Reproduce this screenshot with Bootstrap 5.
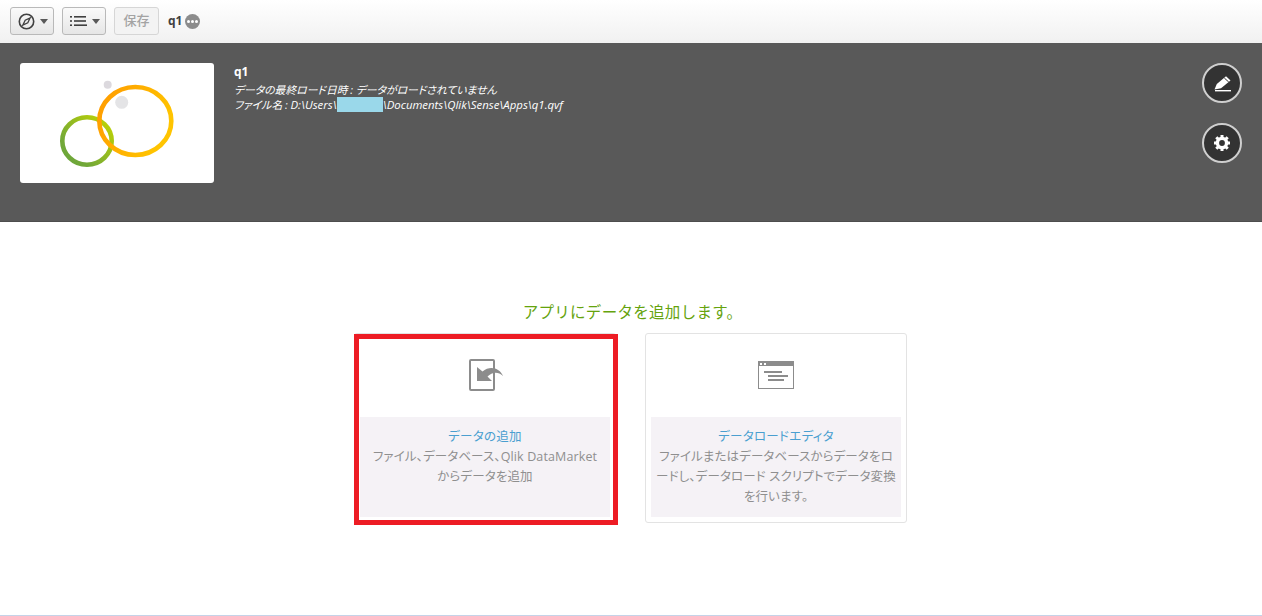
<!DOCTYPE html>
<html lang="ja">
<head>
    <meta charset="UTF-8">
    <title>q1</title>
    <link href="https://cdn.jsdelivr.net/npm/bootstrap@5.3.3/dist/css/bootstrap.min.css" rel="stylesheet">
    <style>
        html, body { height: 100%; }
        body { font-family: "Open Sans", "Noto Sans CJK JP", sans-serif; color: #8c8c8c; background: #fff; overflow: hidden; }
        .page-wrap { height: 616px; border-bottom: 1px solid #c5d3e8; }
        .tool-bar { height: 43px; padding: 7px 10px 8px; gap: 8px; background: linear-gradient(#ffffff, #f1f1f1); }
        .tool-btn { width: 44px; height: 28px; border: 1px solid #b9b9b9; border-radius: 3px; background: linear-gradient(#fafafa, #e6e6e6); gap: 5px; padding: 0 0 0 2px; }
        .tool-btn.save-btn { width: 45px; padding: 0; border-color: #d6d6d6; background: #f3f3f3; color: #a3a3a3; font-size: 13px; font-weight: 500; }
        .caret-down { width: 0; height: 0; border-left: 4px solid transparent; border-right: 4px solid transparent; border-top: 5px solid #595959; }
        .app-name { font-size: 12px; font-weight: 700; color: #404040; margin-left: 1px; margin-right: 3px; }
        .more-dot { width: 15px; height: 15px; border-radius: 50%; background: #8c8c8c; gap: 1px; margin-left: -8px; }
        .more-dot i { width: 3px; height: 3px; background: #fff; border-radius: 50%; display: block; }
        .app-banner { height: 179px; background: #595959; padding: 20px 20px 0; border-bottom: 1px solid #4d4d4d; }
        .thumb-box { width: 194px; height: 120px; background: #fff; border-radius: 3px; flex: none; }
        .app-info { margin-left: 20px; color: #fff; padding-top: 1px; font-feature-settings: "palt"; }
        .app-info h1 { font-size: 12px; font-weight: 700; line-height: 16px; margin: 0 0 2px; }
        .app-info p { font-size: 11.4px; font-style: italic; line-height: 15px; margin: 0; }
        .app-info .jp-text { font-size: 10.8px; }
        .user-mask { display: inline-block; width: 46px; height: 15px; background: #9ad8ea; vertical-align: top; }
        .round-actions { gap: 20px; }
        .round-btn { width: 40px; height: 40px; border-radius: 50%; border: 2px solid #cfcfcf; background: #333; padding: 0; }
        .main-area { padding: 80px 1px 0 0; }
        .add-title { font-size: 15.5px; line-height: 20px; color: #65a30d; margin: 0 0 11px; padding-left: 4px; letter-spacing: .3px; }
        .card-row { gap: 29px; }
        .start-card { width: 262px; height: 190px; border: 1px solid #e3e3e3; border-radius: 3px; background: #fff; padding: 5px; }
        .start-icon { height: 78px; padding-bottom: 6px; }
        .icon-nudge { padding-left: 2px; }
        .start-body { height: 100px; background: #f5f2f6; padding-top: 10px; font-size: 12.5px; line-height: 20px; font-feature-settings: "palt"; }
        .start-body h2 { font-size: 12.5px; line-height: 20px; font-weight: 400; color: #4a9fd0; margin: 0; letter-spacing: .3px; }
        .start-body p { margin: 0; color: #8f8f8f; letter-spacing: .12px; }
        .red-frame { position: absolute; left: -1px; top: 0; width: 264px; height: 191px; border: 5px solid #ed1c24; pointer-events: none; }
    </style>
</head>
<body>
    <div class="page-wrap d-flex flex-column">
        <!-- toolbar -->
        <div class="tool-bar d-flex align-items-center">
            <button class="tool-btn btn d-flex align-items-center justify-content-center">
                <svg width="17" height="17" viewBox="0 0 17 17"><circle cx="8.5" cy="8.5" r="7.2" fill="none" stroke="#404040" stroke-width="1.6"/><path d="M12.2 4.8 9.8 9.8 4.8 12.2 7.2 7.2z" fill="none" stroke="#404040" stroke-width="1.3"/></svg>
                <span class="caret-down"></span>
            </button>
            <button class="tool-btn btn d-flex align-items-center justify-content-center">
                <svg width="17" height="12" viewBox="0 0 17 12" fill="#404040"><rect x="0" y="1" width="2" height="1.6"/><rect x="4" y="1" width="12" height="1.6"/><rect x="0" y="5.2" width="2" height="1.6"/><rect x="4" y="5.2" width="12" height="1.6"/><rect x="0" y="9.4" width="2" height="1.6"/><rect x="4" y="9.4" width="13" height="1.6"/></svg>
                <span class="caret-down"></span>
            </button>
            <button class="tool-btn save-btn btn d-flex align-items-center justify-content-center">保存</button>
            <span class="app-name">q1</span>
            <span class="more-dot d-flex align-items-center justify-content-center"><i></i><i></i><i></i></span>
        </div>

        <!-- app header -->
        <div class="app-banner d-flex">
            <div class="thumb-box">
                <svg width="194" height="120" viewBox="0 0 194 120">
                    <defs>
                        <linearGradient id="greenRing" x1="1" y1="0" x2="0" y2="1"><stop offset="0" stop-color="#c4d600"/><stop offset=".75" stop-color="#72a838"/><stop offset="1" stop-color="#6aa53c"/></linearGradient>
                        <linearGradient id="orangeRing" x1="0" y1="0" x2="1" y2="0.4"><stop offset="0" stop-color="#ff9a00"/><stop offset="1" stop-color="#ffc400"/></linearGradient>
                    </defs>
                    <circle cx="87.7" cy="21.7" r="4" fill="#dcd9de"/>
                    <circle cx="101.7" cy="39.3" r="6.5" fill="#e4e4e6"/>
                    <ellipse cx="67" cy="78" rx="24.7" ry="23.7" fill="none" stroke="url(#greenRing)" stroke-width="4.6"/>
                    <ellipse cx="115.3" cy="58" rx="36" ry="34" fill="none" stroke="url(#orangeRing)" stroke-width="4.6"/>
                </svg>
            </div>
            <div class="app-info flex-grow-1">
                <h1>q1</h1>
                <p class="jp-text">データの最終ロード日時 : データがロードされていません</p>
                <p><span class="jp-text">ファイル名 : </span>D:\Users\<span class="user-mask"></span>\Documents\Qlik\Sense\Apps\q1.qvf</p>
            </div>
            <div class="round-actions d-flex flex-column">
                <button class="round-btn btn d-flex align-items-center justify-content-center">
                    <svg width="20" height="20" viewBox="0 0 20 20"><path d="M2.5 16.5 4.8 11 14 3.3 18.5 7.5 9 15.3z" fill="#fff"/><path d="M12.3 5 16.8 9.1" stroke="#333" stroke-width="1"/><path d="M3 17.7h16" stroke="#fff" stroke-width="1.4"/></svg>
                </button>
                <button class="round-btn btn d-flex align-items-center justify-content-center">
                    <svg width="18" height="18" viewBox="0 0 18 18"><circle cx="9" cy="9" r="4.6" fill="none" stroke="#fff" stroke-width="3.4"/><g stroke="#fff" stroke-width="3"><path d="M9 1v3M9 14v3M1 9h3M14 9h3M3.3 3.3l2.1 2.1M12.6 12.6l2.1 2.1M14.7 3.3l-2.1 2.1M5.4 12.6l-2.1 2.1"/></g></svg>
                </button>
            </div>
        </div>

        <!-- start options -->
        <div class="main-area flex-grow-1 text-center">
            <h3 class="add-title fw-normal">アプリにデータを追加します。</h3>
            <div class="card-row d-flex justify-content-center">
                <div class="start-card position-relative">
                    <div class="start-icon icon-nudge d-flex align-items-center justify-content-center">
                        <svg width="36" height="34" viewBox="0 0 36 34">
                            <rect x="2" y="2" width="24" height="30" rx="1" fill="#fff" stroke="#8c8c8c" stroke-width="2"/>
                            <path d="M9 9V23H24L19.5 18.5C24 14 30 13 35 18 32 10 22 7 14.5 13.5Z" fill="#8c8c8c"/>
                        </svg>
                    </div>
                    <div class="start-body">
                        <h2>データの追加</h2>
                        <p>ファイル、データベース、Qlik DataMarket<br>からデータを追加</p>
                    </div>
                    <div class="red-frame"></div>
                </div>
                <div class="start-card">
                    <div class="start-icon d-flex align-items-center justify-content-center">
                        <svg width="36" height="28" viewBox="0 0 36 28">
                            <rect x="0.5" y="0.5" width="35" height="27" fill="#fff" stroke="#8c8c8c"/>
                            <rect x="0" y="0" width="36" height="5" fill="#8c8c8c"/>
                            <rect x="2" y="2" width="2" height="2" fill="#fff"/><rect x="6" y="2" width="2" height="2" fill="#fff"/>
                            <rect x="6" y="10" width="18" height="2" fill="#8c8c8c"/>
                            <rect x="10" y="14" width="20" height="2" fill="#8c8c8c"/>
                            <rect x="10" y="18" width="16" height="2" fill="#8c8c8c"/>
                        </svg>
                    </div>
                    <div class="start-body">
                        <h2>データロードエディタ</h2>
                        <p>ファイルまたはデータベースからデータをロ<br>ードし、データロード スクリプトでデータ変換<br>を行います。</p>
                    </div>
                </div>
            </div>
        </div>
    </div>
    <script src="https://cdn.jsdelivr.net/npm/bootstrap@5.3.3/dist/js/bootstrap.bundle.min.js"></script>
</body>
</html>
